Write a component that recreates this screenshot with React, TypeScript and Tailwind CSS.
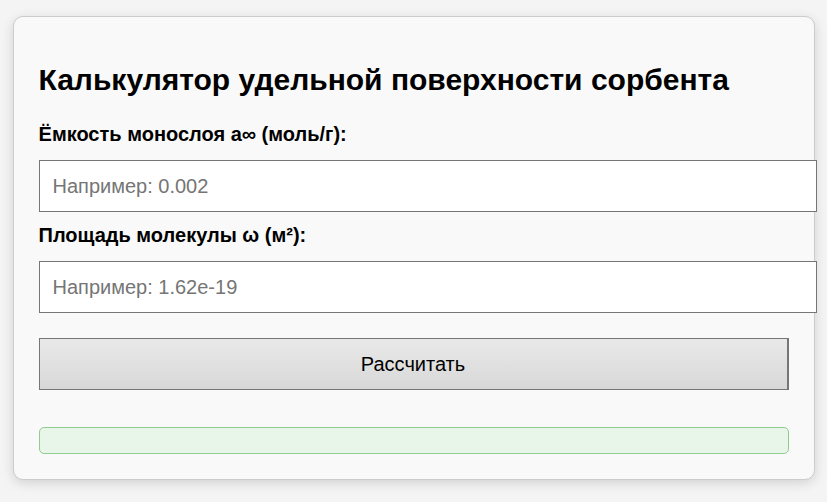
import { useState } from "react";

const App = () => {
  const [capacity, setCapacity] = useState("");
  const [area, setArea] = useState("");
  const [result, setResult] = useState("");

  // S = a∞ · N_A · ω
  const calculate = () => {
    const a = parseFloat(capacity);
    const w = parseFloat(area);
    if (isNaN(a) || isNaN(w)) {
      setResult("Введите корректные значения");
      return;
    }
    const s = a * 6.022e23 * w;
    setResult(`S = ${s.toFixed(2)} м²/г`);
  };

  return (
    <div className="min-h-screen w-full bg-[#f4f4f4] pt-4 font-['Liberation_Sans',Arial,sans-serif] leading-[normal]">
      <div className="mx-auto w-[802px] rounded-[10px] border border-[#cccccc] bg-[#f9f9f9] p-[25px] shadow-[0_3px_12px_rgba(0,0,0,0.14)]">
        {/* Title */}
        <h2 className="mt-[21px] text-[30px] font-bold text-black">
          Калькулятор удельной поверхности сорбента
        </h2>

        {/* Inputs */}
        <label className="mt-[26px] block text-[20px] font-bold text-black">
          Ёмкость монослоя a∞ (моль/г):
        </label>
        <input
          type="text"
          value={capacity}
          onChange={(e) => setCapacity(e.target.value)}
          placeholder="Например: 0.002"
          className="mt-[14px] box-content block h-[22px] w-full border border-[#767676] bg-white px-[13px] py-[14px] text-[20px] text-black outline-none placeholder:text-[#757575]"
        />

        <label className="mt-[12px] block text-[20px] font-bold text-black">
          Площадь молекулы ω (м²):
        </label>
        <input
          type="text"
          value={area}
          onChange={(e) => setArea(e.target.value)}
          placeholder="Например: 1.62e-19"
          className="mt-[14px] box-content block h-[22px] w-full border border-[#767676] bg-white px-[13px] py-[14px] text-[20px] text-black outline-none placeholder:text-[#757575]"
        />

        {/* Button */}
        <button
          onClick={calculate}
          className="mt-[25px] block h-[52px] w-full border border-[#767676] border-r-2 bg-linear-to-b from-[#e9e9e9] to-[#d8d8d8] text-[20px] text-black"
        >
          Рассчитать
        </button>

        {/* Result */}
        <div className="mt-[37px] min-h-[27px] rounded-[5px] border border-[#8fcc8f] bg-[#e8f5e9] px-3 text-[20px]">
          {result}
        </div>
      </div>
    </div>
  );
};

export default App;
